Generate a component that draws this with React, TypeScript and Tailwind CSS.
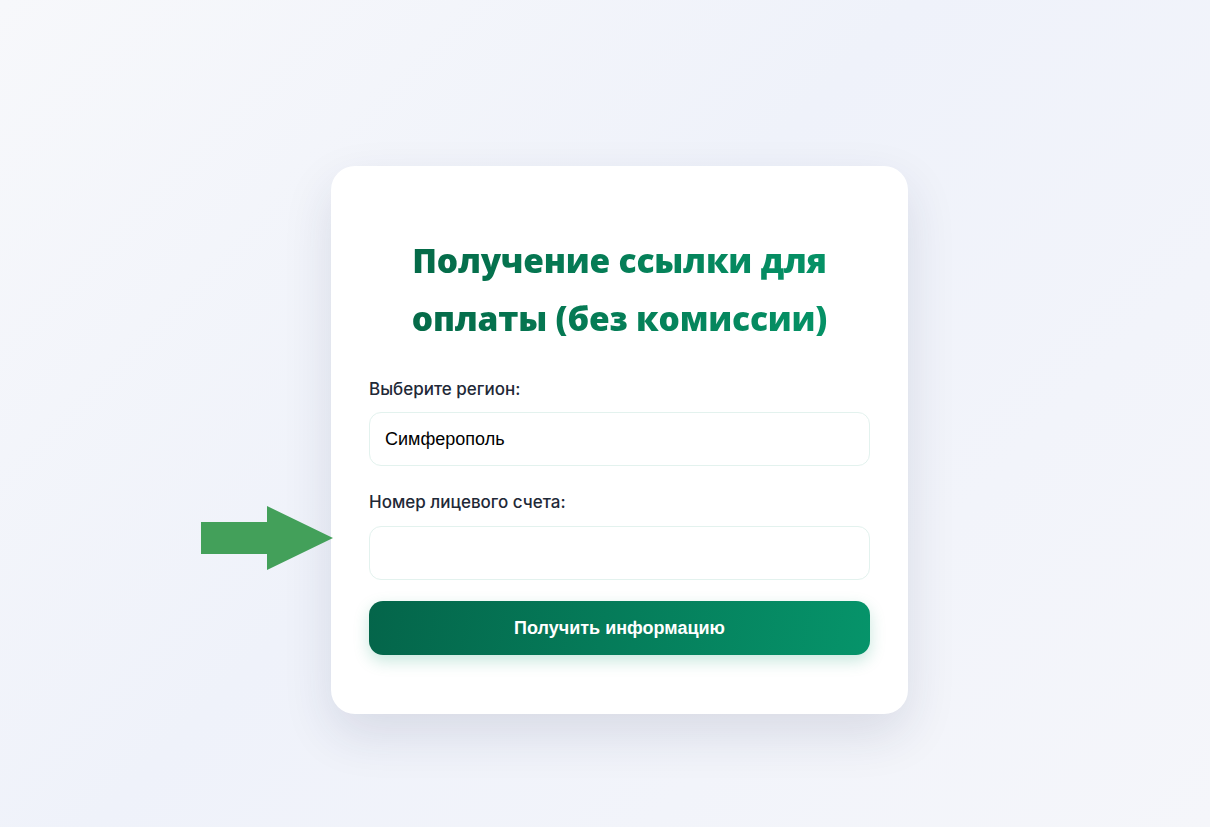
import { useState } from "react";

const sans = "font-['Open_Sans','Noto_Sans',sans-serif]";
const labelFont = "font-['Inter','Noto_Sans',sans-serif]";

const App = () => {
  const [region, setRegion] = useState("Симферополь");
  const [account, setAccount] = useState("");

  return (
    <div className="min-h-screen w-full bg-[linear-gradient(135deg,#f7f8fb_0%,#eff2fa_45%,#f5f6fa_100%)] pt-[166px]">
      <div className="flex justify-center">
        <div className="relative ml-[29px] w-[577px] rounded-[24px] bg-white px-[38px] pb-[59px] pt-[65px] shadow-[0_20px_50px_rgba(30,40,80,0.12)]">
          {/* pointer arrow */}
          <svg
            aria-hidden
            viewBox="0 0 132 64"
            className="absolute left-[-130px] top-[340px] h-[64px] w-[132px]"
          >
            <polygon points="0,16 66,16 66,0 132,32 66,64 66,48 0,48" fill="#43a05a" />
          </svg>

          <h1
            className={`${sans} mb-[31px] bg-[linear-gradient(90deg,#056645_0%,#059669_100%)] bg-clip-text text-center text-[33.5px] font-extrabold leading-[58px] tracking-[-0.2px] text-transparent`}
          >
            Получение ссылки для
            <br />
            оплаты (без комиссии)
          </h1>

          <label className={`${labelFont} mb-[12px] block text-[17px] font-medium leading-[22px] text-[#1f2937]`}>
            Выберите регион:
          </label>
          <input
            value={region}
            onChange={(e) => setRegion(e.target.value)}
            className="mb-[25px] block h-[54px] w-full rounded-[12px] border border-[#e3f2ee] bg-white px-[15px] font-['Liberation_Sans',Arial,sans-serif] text-[18px] text-black outline-none"
          />

          <label className={`${labelFont} mb-[13px] block text-[17px] font-medium leading-[22px] text-[#1f2937]`}>
            Номер лицевого счета:
          </label>
          <input
            value={account}
            onChange={(e) => setAccount(e.target.value)}
            className="mb-[21px] block h-[54px] w-full rounded-[12px] border border-[#e3f2ee] bg-white px-[15px] font-['Liberation_Sans',Arial,sans-serif] text-[18px] text-black outline-none"
          />

          <button
            type="button"
            className="block h-[54px] w-full rounded-[14px] bg-[linear-gradient(100deg,#04654a_0%,#06946a_100%)] font-['Liberation_Sans',Arial,sans-serif] text-[18px] font-bold text-white shadow-[0_6px_16px_rgba(5,150,105,0.22)]"
          >
            Получить информацию
          </button>
        </div>
      </div>
    </div>
  );
};

export default App;
